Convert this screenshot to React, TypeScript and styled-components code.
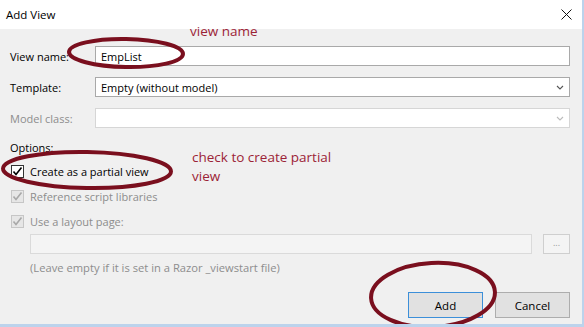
import React from "react";
import styled, { createGlobalStyle } from "styled-components";

const GlobalStyle = createGlobalStyle`
  html, body { margin: 0; padding: 0; background: #f0f0f0; }
  body { font-family: "Open Sans", "Noto Sans", "Liberation Sans", sans-serif; }
`;

const Dialog = styled.div`
  position: relative;
  width: 584px;
  height: 327px;
  box-sizing: border-box;
  display: flex;
  flex-direction: column;
  border-right: 2px solid #bcd3ec;
  border-bottom: 3px solid #bcd3ec;
  box-shadow: inset 0 -1px 0 #a8a8a8;
  overflow: hidden;
  font-size: 11px;
  color: #000;
`;

const TitleBar = styled.div`
  height: 29px;
  flex: none;
  background: #fff;
  display: flex;
  align-items: center;
  justify-content: space-between;
  padding: 0 10px 0 6px;
`;

const Title = styled.span`
  font-size: 11.5px;
  color: #000;
  margin-top: -1px;
`;

const Body = styled.div`
  flex: 1;
  background: #f0f0f0;
  padding: 17px 12px 0 10px;
  display: flex;
  flex-direction: column;
`;

const FieldRow = styled.div`
  display: flex;
  align-items: center;
  height: 20px;
  margin-bottom: 11px;
`;

const Label = styled.label<{ $disabled?: boolean }>`
  width: 85px;
  flex: none;
  color: ${(p) => (p.$disabled ? "#8d8d8d" : "#000")};
`;

const TextBox = styled.div<{ $disabled?: boolean; $faded?: boolean }>`
  flex: 1;
  height: 20px;
  box-sizing: border-box;
  border: 1px solid ${(p) => (p.$faded ? "#dadada" : p.$disabled ? "#d6d6d6" : "#a9a9a9")};
  background: ${(p) => (p.$faded ? "#f4f4f4" : "#fff")};
  display: flex;
  align-items: center;
  padding: 0 5px;
`;

const Chevron = styled.svg`
  margin-left: auto;
  flex: none;
`;

const SectionLabel = styled.div`
  height: 20px;
  line-height: 17px;
`;

const CheckRow = styled.div<{ $disabled?: boolean }>`
  display: flex;
  align-items: center;
  height: 25px;
  padding-left: 1px;
  color: ${(p) => (p.$disabled ? "#8d8d8d" : "#000")};
`;

const Box = styled.span<{ $disabled?: boolean }>`
  width: 13px;
  height: 13px;
  box-sizing: border-box;
  border: 1px solid ${(p) => (p.$disabled ? "#c6c6c6" : "#333")};
  background: ${(p) => (p.$disabled ? "#e6e6e6" : "#fff")};
  display: flex;
  align-items: center;
  justify-content: center;
  margin-right: 6px;
  flex: none;
`;

const Indented = styled.div`
  display: flex;
  align-items: center;
  gap: 11px;
  padding-left: 20px;
`;

const SmallButton = styled.div`
  width: 27px;
  height: 20px;
  box-sizing: border-box;
  border: 1px solid #cfcfcf;
  background: #f4f4f4;
  color: #9a9a9a;
  font-size: 9px;
  display: flex;
  align-items: center;
  justify-content: center;
  padding-bottom: 3px;
`;

const Hint = styled.div`
  padding-left: 20px;
  color: #8d8d8d;
  margin-top: 6px;
  font-size: 11.2px;
`;

const ButtonBar = styled.div`
  margin-top: auto;
  margin-bottom: 6px;
  display: flex;
  justify-content: flex-end;
  gap: 12px;
`;

const Button = styled.button<{ $default?: boolean }>`
  width: 75px;
  height: 26px;
  box-sizing: border-box;
  border: 1px solid ${(p) => (p.$default ? "#3c8fd9" : "#adadad")};
  background: #e1e1e1;
  font-family: inherit;
  font-size: 11.5px;
  color: #000;
  padding: 0;
`;

const Overlay = styled.svg`
  position: absolute;
  left: 0;
  top: 0;
  pointer-events: none;
`;

const Note = styled.span<{ $x: number; $y: number }>`
  position: absolute;
  left: ${(p) => p.$x}px;
  top: ${(p) => p.$y}px;
  color: #9c2336;
  font-size: 13.5px;
  line-height: 19px;
  width: 160px;
`;

const Check = ({ color }: { color: string }) => (
  <svg width="11" height="11" viewBox="0 0 11 11">
    <path d="M1.5 5.5 L4 8.5 L9.5 1.5" fill="none" stroke={color} strokeWidth="1.6" />
  </svg>
);

const Down = ({ color }: { color: string }) => (
  <Chevron width="8" height="5" viewBox="0 0 8 5">
    <path d="M1 1 L4 4 L7 1" fill="none" stroke={color} strokeWidth="1.1" />
  </Chevron>
);

export default function App() {
  return (
    <>
      <GlobalStyle />
      <Dialog>
        <TitleBar>
          <Title>Add View</Title>
          <svg width="11" height="11" viewBox="0 0 11 11">
            <path d="M0.5 0.5 L10.5 10.5 M10.5 0.5 L0.5 10.5" stroke="#111" strokeWidth="1" />
          </svg>
        </TitleBar>
        <Body>
          <FieldRow>
            <Label>View name:</Label>
            <TextBox>EmpList</TextBox>
          </FieldRow>
          <FieldRow>
            <Label>Template:</Label>
            <TextBox>
              Empty (without model)
              <Down color="#555" />
            </TextBox>
          </FieldRow>
          <FieldRow>
            <Label $disabled>Model class:</Label>
            <TextBox $disabled>
              <Down color="#bbb" />
            </TextBox>
          </FieldRow>
          <SectionLabel>Options:</SectionLabel>
          <CheckRow>
            <Box>
              <Check color="#000" />
            </Box>
            Create as a partial view
          </CheckRow>
          <CheckRow $disabled>
            <Box $disabled>
              <Check color="#a8a8a8" />
            </Box>
            Reference script libraries
          </CheckRow>
          <CheckRow $disabled>
            <Box $disabled>
              <Check color="#a8a8a8" />
            </Box>
            Use a layout page:
          </CheckRow>
          <Indented>
            <TextBox $faded />
            <SmallButton>...</SmallButton>
          </Indented>
          <Hint>(Leave empty if it is set in a Razor _viewstart file)</Hint>
          <ButtonBar>
            <Button $default>Add</Button>
            <Button>Cancel</Button>
          </ButtonBar>
        </Body>
        <Note $x={190} $y={22}>view name</Note>
        <Note $x={192} $y={148}>
          check to create partial view
        </Note>
        <Overlay width="584" height="327" viewBox="0 0 584 327">
          <g fill="none" stroke="#7a0f1e" strokeWidth="4">
            <ellipse cx="126" cy="53" rx="57" ry="14" transform="rotate(1 126 53)" />
            <ellipse cx="87" cy="170" rx="84" ry="18" transform="rotate(1 87 170)" />
            <ellipse cx="433" cy="295" rx="62" ry="32" transform="rotate(-3 433 295)" />
          </g>
        </Overlay>
      </Dialog>
    </>
  );
}
